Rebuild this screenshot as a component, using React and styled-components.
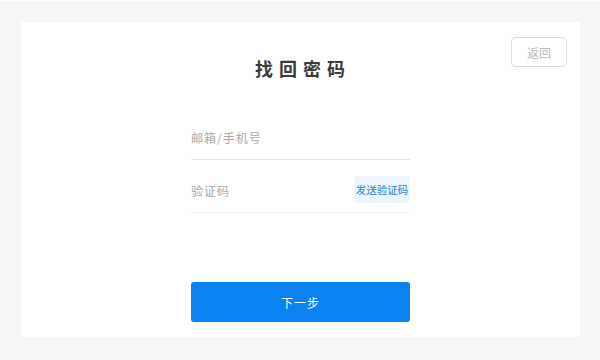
import React from "react";
import styled, { createGlobalStyle } from "styled-components";

const GlobalStyle = createGlobalStyle`
  html, body {
    margin: 0;
    padding: 0;
    background: #f5f7f7;
    font-family: "Noto Sans CJK SC", "Noto Sans", sans-serif;
  }
`;

const Page = styled.div`
  width: 600px;
  height: 360px;
  box-sizing: border-box;
  border-top: 1px solid #ffffff;
  padding: 21px 20px 23px 21px;
`;

const Card = styled.div`
  position: relative;
  background: #ffffff;
  height: 100%;
  display: flex;
  flex-direction: column;
  align-items: center;
`;

const BackButton = styled.button`
  position: absolute;
  top: 15px;
  right: 13px;
  width: 56px;
  height: 30px;
  border: 1px solid #dcdcdc;
  border-radius: 4px;
  background: #fff;
  color: #b8b8b8;
  font-family: inherit;
  font-size: 12px;
  padding: 0;
`;

const Title = styled.h1`
  margin: 33px 0 0 5px;
  font-size: 18px;
  font-weight: 700;
  letter-spacing: 6px;
  color: #3a3a3a;
  line-height: 26px;
`;

const Form = styled.div`
  width: 219px;
  margin-top: 32px;
  display: flex;
  flex-direction: column;
`;

const Field = styled.div`
  display: flex;
  align-items: center;
  justify-content: space-between;
  height: ${(p) => p.h}px;
  border-bottom: 1px solid ${(p) => p.line};
  margin-bottom: ${(p) => p.mb || 0}px;
`;

const Input = styled.input`
  flex: 1;
  min-width: 0;
  border: none;
  outline: none;
  padding: 3px 0 0 0;
  font-family: inherit;
  font-size: 12px;
  letter-spacing: 1px;
  color: #333;
  background: transparent;
  &::placeholder {
    color: #a8a8a8;
  }
`;

const SendButton = styled.button`
  height: 27px;
  width: 56px;
  border: none;
  border-radius: 4px;
  background: #eef6fd;
  color: #1f7fd4;
  font-family: inherit;
  font-size: 10.5px;
  padding: 0;
  white-space: nowrap;
`;

const NextButton = styled.button`
  margin-top: 69px;
  height: 40px;
  width: 100%;
  border: none;
  border-radius: 3px;
  background: #0a83f1;
  color: #ffffff;
  font-family: inherit;
  font-size: 12px;
  letter-spacing: 1px;
`;

export default function App() {
  return (
    <>
      <GlobalStyle />
      <Page>
        <Card>
          <BackButton>返回</BackButton>
          <Title>找回密码</Title>
          <Form>
            <Field h={46} line="#e3e3e3" mb={6}>
              <Input placeholder="邮箱/手机号" />
            </Field>
            <Field h={46} line="#f0f0f0">
              <Input placeholder="验证码" />
              <SendButton>发送验证码</SendButton>
            </Field>
            <NextButton>下一步</NextButton>
          </Form>
        </Card>
      </Page>
    </>
  );
}
